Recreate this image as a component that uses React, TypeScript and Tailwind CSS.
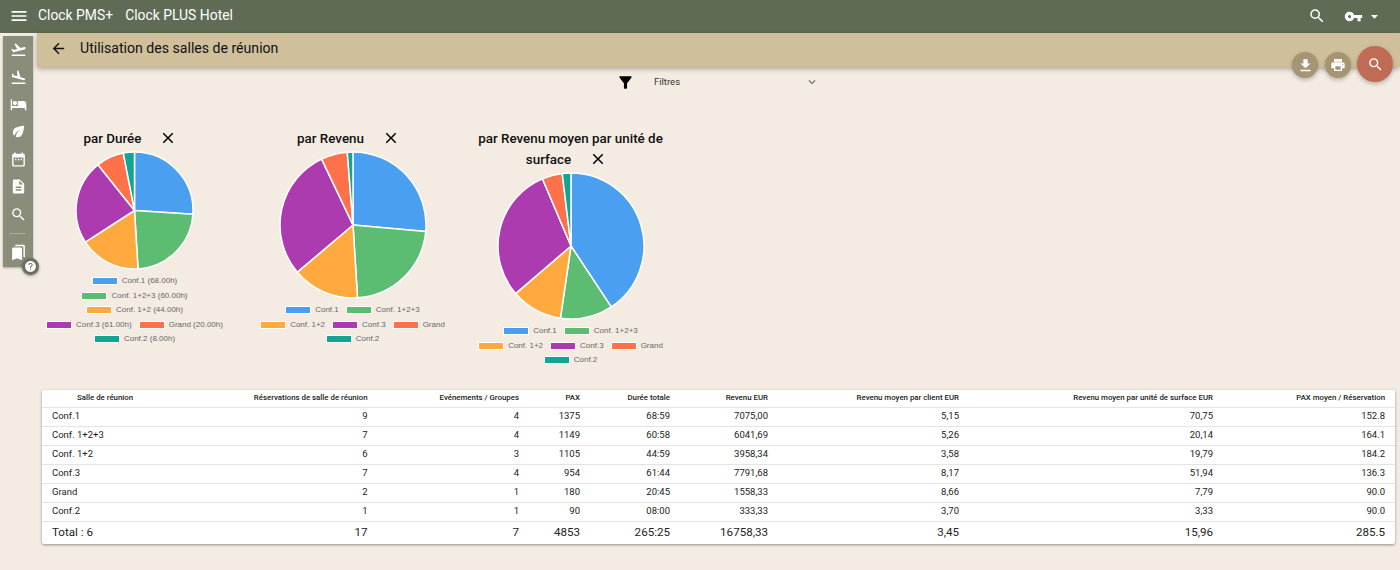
import React from "react";
import {
  MdArrowBack,
  MdArrowDropDown,
  MdBookmarks,
  MdClose,
  MdDateRange,
  MdDescription,
  MdEco,
  MdExpandMore,
  MdFileDownload,
  MdFilterAlt,
  MdFlightLand,
  MdFlightTakeoff,
  MdHelp,
  MdHotel,
  MdMenu,
  MdPrint,
  MdSearch,
  MdVpnKey,
} from "react-icons/md";

const COLORS = ["#4a9ff0", "#5cbd72", "#ffa93f", "#ad3bb0", "#ff7149", "#12a594"];

type LegendItem = { color: number; label: string };

type Chart = {
  title: string;
  values: number[];
  pieSize: number;
  legend: LegendItem[][];
};

const names = ["Conf.1", "Conf. 1+2+3", "Conf. 1+2", "Conf.3", "Grand", "Conf.2"];

const plainLegend: LegendItem[][] = [
  [
    { color: 0, label: names[0] },
    { color: 1, label: names[1] },
  ],
  [
    { color: 2, label: names[2] },
    { color: 3, label: names[3] },
    { color: 4, label: names[4] },
  ],
  [{ color: 5, label: names[5] }],
];

const CHARTS: Chart[] = [
  {
    title: "par Durée",
    values: [68, 60, 44, 61, 20, 8],
    pieSize: 119,
    legend: [
      [{ color: 0, label: "Conf.1 (68.00h)" }],
      [{ color: 1, label: "Conf. 1+2+3 (60.00h)" }],
      [{ color: 2, label: "Conf. 1+2 (44.00h)" }],
      [
        { color: 3, label: "Conf.3 (61.00h)" },
        { color: 4, label: "Grand (20.00h)" },
      ],
      [{ color: 5, label: "Conf.2 (8.00h)" }],
    ],
  },
  {
    title: "par Revenu",
    values: [7075, 6041.69, 3958.34, 7791.68, 1558.33, 333.33],
    pieSize: 148,
    legend: plainLegend,
  },
  {
    title: "par Revenu moyen par unité de surface",
    values: [70.75, 20.14, 19.79, 51.94, 7.79, 3.33],
    pieSize: 148,
    legend: plainLegend,
  },
];

const ROWS = [
  ["Conf.1", "9", "4", "1375", "68:59", "7075,00", "5,15", "70,75", "152.8"],
  ["Conf. 1+2+3", "7", "4", "1149", "60:58", "6041,69", "5,26", "20,14", "164.1"],
  ["Conf. 1+2", "6", "3", "1105", "44:59", "3958,34", "3,58", "19,79", "184.2"],
  ["Conf.3", "7", "4", "954", "61:44", "7791,68", "8,17", "51,94", "136.3"],
  ["Grand", "2", "1", "180", "20:45", "1558,33", "8,66", "7,79", "90.0"],
  ["Conf.2", "1", "1", "90", "08:00", "333,33", "3,70", "3,33", "90.0"],
];

const HEADERS = [
  "Salle de réunion",
  "Réservations de salle de réunion",
  "Evénements / Groupes",
  "PAX",
  "Durée totale",
  "Revenu EUR",
  "Revenu moyen par client EUR",
  "Revenu moyen par unité de surface EUR",
  "PAX moyen / Réservation",
];

const TOTAL = ["Total : 6", "17", "7", "4853", "265:25", "16758,33", "3,45", "15,96", "285.5"];

const COL_WIDTHS = [
  "w-[140px]",
  "w-[195.5px]",
  "w-[151.5px]",
  "w-[61px]",
  "w-[90px]",
  "w-[98px]",
  "w-[191px]",
  "w-[254px]",
  "w-[172px]",
];

const Pie: React.FC<{ values: number[]; size: number }> = ({ values, size }) => {
  const total = values.reduce((a, b) => a + b, 0);
  const r = size / 2 - 1;
  const c = size / 2;
  let angle = -Math.PI / 2;
  return (
    <svg width={size} height={size} viewBox={`0 0 ${size} ${size}`} className="mt-[2px] block shrink-0">
      {values.map((v, i) => {
        const next = angle + (v / total) * Math.PI * 2;
        const x1 = c + r * Math.cos(angle);
        const y1 = c + r * Math.sin(angle);
        const x2 = c + r * Math.cos(next);
        const y2 = c + r * Math.sin(next);
        const large = next - angle > Math.PI ? 1 : 0;
        angle = next;
        return (
          <path
            key={i}
            d={`M${c} ${c}L${x1} ${y1}A${r} ${r} 0 ${large} 1 ${x2} ${y2}Z`}
            fill={COLORS[i]}
            stroke="#fff"
            strokeWidth={1.5}
            strokeLinejoin="round"
          />
        );
      })}
    </svg>
  );
};

const Legend: React.FC<{ rows: LegendItem[][] }> = ({ rows }) => (
  <div className="mt-[4px] flex flex-col items-center font-['Liberation_Sans',sans-serif] text-[8px] leading-[14.5px] text-[#666]">
    {rows.map((row, i) => (
      <div key={i} className="flex gap-[7px] whitespace-nowrap">
        {row.map((item) => (
          <div key={item.label} className="flex items-center gap-[4px]">
            <span
              className="h-[8px] w-[26px] shrink-0 border border-white"
              style={{ backgroundColor: COLORS[item.color] }}
            />
            <span>{item.label}</span>
          </div>
        ))}
      </div>
    ))}
  </div>
);

const ChartCard: React.FC<{ chart: Chart }> = ({ chart }) => (
  <div className="flex w-[201px] flex-col items-center">
    <div className="pt-[1px] text-center text-[13.4px] leading-[21px] font-medium text-[#111]">
      {chart.title}
      <MdClose className="mr-[8px] ml-[18px] inline-block align-[-4px] text-black" size={18} />
    </div>
    <Pie values={chart.values} size={chart.pieSize} />
    <Legend rows={chart.legend} />
  </div>
);

const SideIcon: React.FC<{ icon: React.ElementType; size?: number }> = ({ icon: Icon, size = 17 }) => (
  <div className="flex h-[27.4px] items-center justify-center text-white">
    <Icon size={size} />
  </div>
);

export default function App() {
  return (
    <div className="relative h-[570px] w-[1400px] overflow-hidden bg-[#f4ece3] font-['Roboto',sans-serif]">
      <header className="flex h-[33px] items-center bg-[#5f6b54] pr-[17px] pb-[1px] pl-[11px] text-white">
        <MdMenu size={16} className="mr-[11px] scale-125" />
        <span className="text-[13.9px] leading-none">Clock PMS+</span>
        <span className="ml-[12px] text-[13.9px] leading-none">Clock PLUS Hotel</span>
        <MdSearch size={18} className="mr-[18px] ml-auto" />
        <MdVpnKey size={19} className="mr-[3px]" />
        <MdArrowDropDown size={17} />
      </header>

      <div className="ml-[37px] flex h-[34px] items-center bg-[#cfc09b] pb-[3px] pl-[13px] text-[14.1px] text-[#111] shadow-[0_2px_5px_rgba(0,0,0,0.3)]">
        <MdArrowBack size={17} />
        <span className="ml-[13px]">Utilisation des salles de réunion</span>
      </div>

      <div className="flex h-[28px] items-center pt-[2px] pl-[618px] text-[#333]">
        <MdFilterAlt size={15} className="scale-125 text-black" />
        <span className="ml-[21px] text-[9.5px]">Filtres</span>
        <MdExpandMore size={14} className="ml-[125px] text-[#666]" />
      </div>

      <div className="mt-[32px] flex h-[263px] gap-[17px] pl-[34px]">
        {CHARTS.map((chart) => (
          <ChartCard key={chart.title} chart={chart} />
        ))}
      </div>

      <div className="ml-[42px] w-[1353px] overflow-hidden rounded-[2px] bg-white shadow-[0_1px_3px_rgba(0,0,0,0.4)]">
        <table className="w-full table-fixed border-collapse text-right text-[9.5px] text-[#222]">
          <colgroup>
            {COL_WIDTHS.map((w) => (
              <col key={w} className={w} />
            ))}
          </colgroup>
          <thead>
            <tr className="h-[17px] border-b border-[#e4e4e4] text-[7.85px]">
              {HEADERS.map((h, i) => (
                <th key={h} className={`pr-[10px] font-medium whitespace-nowrap ${i === 0 ? "pl-[35px] text-left" : "text-right"}`}>
                  {h}
                </th>
              ))}
            </tr>
          </thead>
          <tbody>
            {ROWS.map((row) => (
              <tr key={row[0]} className="h-[19px] border-b border-[#e4e4e4]">
                {row.map((cell, i) => (
                  <td key={i} className={`pr-[10px] whitespace-nowrap ${i === 0 ? "pl-[10px] text-left" : "text-right"}`}>
                    {cell}
                  </td>
                ))}
              </tr>
            ))}
            <tr className="h-[23px] text-[11.6px]">
              {TOTAL.map((cell, i) => (
                <td key={i} className={`pr-[10px] whitespace-nowrap ${i === 0 ? "pl-[10px] text-left" : "text-right"}`}>
                  {cell}
                </td>
              ))}
            </tr>
          </tbody>
        </table>
      </div>

      {/* Floating rail over the page */}
      <nav className="absolute top-[36px] left-[3px] flex h-[231px] w-[30px] flex-col bg-[#8a8d7a] shadow-[0_1px_2px_rgba(0,0,0,0.3)]">
        <SideIcon icon={MdFlightTakeoff} />
        <SideIcon icon={MdFlightLand} />
        <SideIcon icon={MdHotel} />
        <SideIcon icon={MdEco} />
        <SideIcon icon={MdDateRange} />
        <SideIcon icon={MdDescription} />
        <SideIcon icon={MdSearch} />
        <div className="mx-[7px] my-[5px] h-px bg-[#a9ab9c]" />
        <SideIcon icon={MdBookmarks} />
      </nav>
      <div className="absolute top-[258px] left-[22px] flex h-[17px] w-[17px] items-center justify-center rounded-full bg-[#6b6f5e] text-white shadow-[0_1px_3px_rgba(0,0,0,0.4)]">
        <MdHelp size={13} />
      </div>

      {/* Floating action buttons */}
      <div className="absolute top-[52px] left-[1292px] flex h-[26px] w-[26px] items-center justify-center rounded-full bg-[#a59572] text-white shadow-[0_2px_4px_rgba(0,0,0,0.25)]">
        <MdFileDownload size={17} />
      </div>
      <div className="absolute top-[52px] left-[1325px] flex h-[26px] w-[26px] items-center justify-center rounded-full bg-[#a59572] text-white shadow-[0_2px_4px_rgba(0,0,0,0.25)]">
        <MdPrint size={16} />
      </div>
      <div className="absolute top-[46px] left-[1357px] flex h-[36px] w-[36px] items-center justify-center rounded-full bg-[#c06c54] text-white shadow-[0_2px_4px_rgba(0,0,0,0.25)]">
        <MdSearch size={17} />
      </div>
    </div>
  );
}
